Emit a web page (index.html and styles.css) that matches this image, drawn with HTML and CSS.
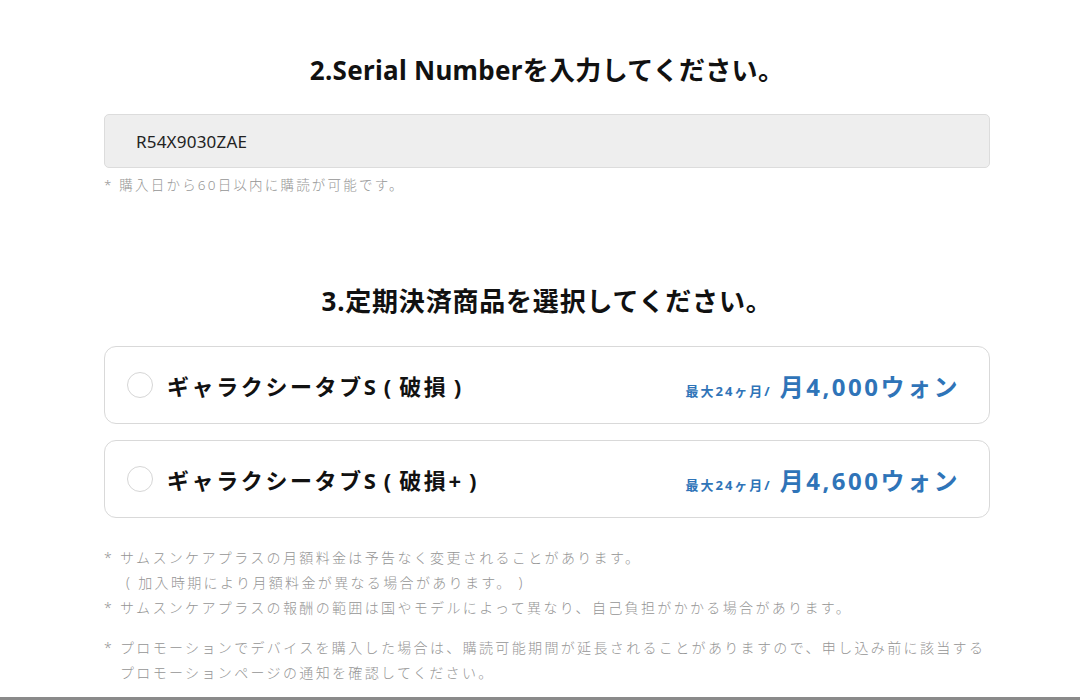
FILE: index.html
```html
<!DOCTYPE html>
<html lang="ja">
<head>
<meta charset="utf-8">
<link rel="stylesheet" href="styles.css">
</head>
<body>
<div class="page">
  <section class="step">
    <h2 class="step-title">2.Serial Numberを入力してください。</h2>
    <div class="serial-input">R54X9030ZAE</div>
    <p class="hint">* 購入日から60日以内に購読が可能です。</p>
  </section>

  <section class="step step-products">
    <h2 class="step-title step-title-2">3.定期決済商品を選択してください。</h2>
    <div class="options">
      <label class="option">
        <span class="radio"></span>
        <span class="option-name">ギャラクシータブS ( 破損 )</span>
        <span class="price"><span class="price-term">最大24ヶ月/</span><span class="price-value">月4,000ウォン</span></span>
      </label>
      <label class="option">
        <span class="radio"></span>
        <span class="option-name">ギャラクシータブS ( 破損+ )</span>
        <span class="price"><span class="price-term">最大24ヶ月/</span><span class="price-value">月4,600ウォン</span></span>
      </label>
    </div>
    <ul class="notes">
      <li class="note"><span class="mark">*</span><span class="note-text">サムスンケアプラスの月額料金は予告なく変更されることがあります。<br>&nbsp;( 加入時期により月額料金が異なる場合があります。 )</span></li>
      <li class="note"><span class="mark">*</span><span class="note-text">サムスンケアプラスの報酬の範囲は国やモデルによって異なり、自己負担がかかる場合があります。</span></li>
      <li class="note note-gap"><span class="mark">*</span><span class="note-text">プロモーションでデバイスを購入した場合は、購読可能期間が延長されることがありますので、申し込み前に該当する<br>プロモーションページの通知を確認してください。</span></li>
    </ul>
  </section>
</div>
<div class="bottom-rule"></div>
</body>
</html>
```

FILE: styles.css
```css
html, body {
  margin: 0;
  padding: 0;
  background: #ffffff;
}
body {
  font-family: "Noto Sans", "Noto Sans CJK JP", sans-serif;
  color: #111;
  width: 1080px;
  height: 700px;
  overflow: hidden;
  position: relative;
}
.page {
  width: 886px;
  margin: 0 0 0 104px;
  padding-top: 50px;
}
.step-title {
  margin: 0;
  text-align: center;
  font-size: 26px;
  font-weight: 700;
  line-height: 40px;
  letter-spacing: 0.3px;
}
.step-title-2 {
  letter-spacing: 0.8px;
}
.serial-input {
  margin-top: 24px;
  height: 54px;
  box-sizing: border-box;
  border: 1px solid #dcdcdc;
  background: #eeeeee;
  border-radius: 5px;
  padding: 0 31px;
  display: flex;
  align-items: center;
  font-size: 17px;
  color: #222;
  letter-spacing: 0.2px;
}
.hint {
  margin: 7px 0 0;
  font-size: 13.5px;
  font-weight: 300;
  color: #959595;
  line-height: 20px;
  letter-spacing: 2.2px;
}
.step-products {
  margin-top: 86px;
}
.options {
  margin-top: 25px;
  display: flex;
  flex-direction: column;
  gap: 16px;
}
.option {
  height: 78px;
  box-sizing: border-box;
  border: 1px solid #d9d9d9;
  border-radius: 12px;
  display: flex;
  align-items: center;
  padding: 0 29px 0 22px;
}
.radio {
  width: 26px;
  height: 26px;
  box-sizing: border-box;
  border: 1px solid #d6d6d6;
  border-radius: 50%;
  flex: none;
}
.option-name {
  margin-left: 14px;
  font-size: 22px;
  font-weight: 700;
  color: #111;
  letter-spacing: 2.6px;
  word-spacing: -3px;
  flex: 1;
}
.price {
  display: flex;
  align-items: baseline;
  color: #2f74b8;
  font-weight: 700;
}
.price-term {
  font-size: 13px;
  letter-spacing: 2px;
  margin-right: 8px;
}
.price-value {
  font-size: 24px;
  letter-spacing: 2.5px;
}
.notes {
  list-style: none;
  margin: 27px 0 0;
  padding: 0;
}
.note {
  display: flex;
  font-size: 14px;
  font-weight: 300;
  color: #959595;
  line-height: 25px;
  letter-spacing: 2.35px;
}
.mark {
  width: 16px;
  flex: none;
}
.note-gap {
  margin-top: 15px;
}
.bottom-rule {
  position: absolute;
  left: 0;
  right: 0;
  bottom: 0;
  height: 3px;
  background: #8a8a8a;
}
```
